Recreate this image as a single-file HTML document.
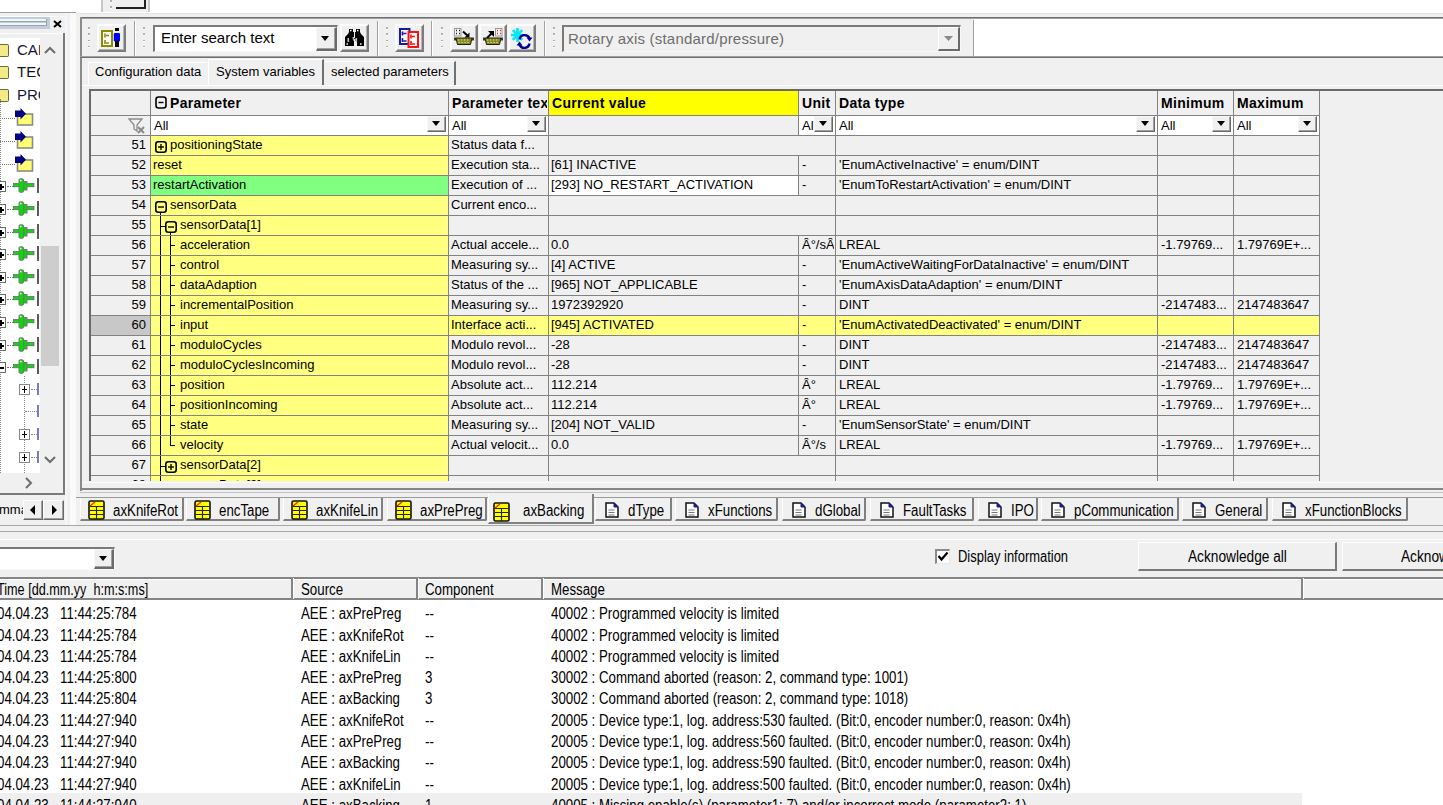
<!DOCTYPE html><html><head><meta charset="utf-8"><style>
*{box-sizing:border-box}
body{margin:0;width:1443px;height:805px;position:relative;overflow:hidden;background:#fff;font-family:'Liberation Sans', sans-serif;font-size:13px;color:#000}
.ab{position:absolute}
.t{position:absolute;white-space:nowrap;line-height:1}
.hl{position:absolute;height:1px}
.vl{position:absolute;width:1px}
.btn3d{position:absolute;background:#f0f0f0;border-top:1px solid #fff;border-left:1px solid #fff;border-right:1px solid #696969;border-bottom:1px solid #696969;box-shadow:inset -1px -1px 0 #a0a0a0}
.dd{position:absolute;background:#f0f0f0;border-top:1px solid #f8f8f8;border-left:1px solid #f8f8f8;border-right:1px solid #696969;border-bottom:1px solid #696969;box-shadow:inset -1px -1px 0 #a0a0a0}
.dd:after{content:"";position:absolute;left:50%;top:50%;margin-left:-5px;margin-top:-3px;border-left:4.5px solid transparent;border-right:4.5px solid transparent;border-top:5px solid #000}
.grip{position:absolute;width:2px;background:repeating-linear-gradient(#b0b0b0 0 1.5px,#fff 1.5px 2.5px,transparent 2.5px 6.3px)}
</style></head><body>

<div class="ab" style="left:101px;top:0px;width:49px;height:12px;background:#f0f0f0;border-left:2px solid #c8c8c8;border-right:2px solid #c8c8c8"></div>
<div class="grip" style="left:110px;top:0px;height:10px"></div>
<div class="ab" style="left:116px;top:0px;width:30px;height:9px;background:#f0f0f0;border-right:2px solid #222;border-bottom:2px solid #222"></div>
<div class="ab" style="left:0px;top:12px;width:76px;height:514px;background:#f0f0f0;"></div>
<div class="ab" style="left:0px;top:12px;width:76px;height:1px;background:#a0a0a0;"></div>
<div class="ab" style="left:0px;top:16px;width:66px;height:1px;background:#fafcfe;"></div>
<div class="ab" style="left:0px;top:17px;width:50px;height:12px;background:#bfcddd;"></div>
<div class="ab" style="left:0px;top:19px;width:47px;height:3px;background:#f2f5f9;border-bottom:1px solid #9aa2aa"></div>
<div class="ab" style="left:0px;top:23px;width:47px;height:3px;background:#f2f5f9;border-bottom:1px solid #9aa2aa"></div>
<div class="ab" style="left:46px;top:19px;width:1px;height:7px;background:#9aa2aa;"></div>
<svg class="ab" style="left:53px;top:20px" width="9" height="8" viewBox="0 0 9 8"><path d="M1 1l7 6M8 1L1 7" stroke="#000" stroke-width="2"/></svg>
<div class="ab" style="left:0px;top:33px;width:65px;height:462px;background:#f0f0f0;border-right:2px solid #7a7a7a;border-bottom:2px solid #7a7a7a"></div>
<div class="ab" style="left:0px;top:38px;width:40px;height:435px;background:#fff;"></div>
<div class="ab" style="left:0px;top:33px;width:63px;height:1px;background:#fcfcfc;"></div>
<div class="ab" style="left:41px;top:246px;width:18px;height:120px;background:#cdcdcd;"></div>
<svg class="ab" style="left:44px;top:45px" width="12" height="10"><polyline points="1,8 6,3 11,8" fill="none" stroke="#6d6d6d" stroke-width="2"/></svg>
<svg class="ab" style="left:44px;top:455px" width="12" height="10"><polyline points="1,2 6,7 11,2" fill="none" stroke="#6d6d6d" stroke-width="2"/></svg>
<svg class="ab" style="left:24px;top:477px" width="10" height="12"><polyline points="2,1 7,6 2,11" fill="none" stroke="#6d6d6d" stroke-width="2"/></svg>
<div class="ab" style="left:65px;top:13px;width:2px;height:513px;background:#f3f6fa;"></div>
<div class="ab" style="left:70px;top:13px;width:6px;height:513px;background:#fafafa;"></div>
<div class="ab" style="left:0px;top:44px;width:9px;height:13px;background:#f3ec86;border:1px solid #6a6a40;border-left:none;border-radius:0 2px 2px 0"></div>
<div class="t" style="left:17px;top:42px;font-size:15px;color:#15153a;width:23px;overflow:hidden">CAI</div>
<div class="ab" style="left:0px;top:66px;width:9px;height:13px;background:#f3ec86;border:1px solid #6a6a40;border-left:none;border-radius:0 2px 2px 0"></div>
<div class="t" style="left:17px;top:64px;font-size:15px;color:#151515;width:23px;overflow:hidden">TEC</div>
<div class="ab" style="left:0px;top:89px;width:9px;height:13px;background:#f3ec86;border:1px solid #6a6a40;border-left:none;border-radius:0 2px 2px 0"></div>
<div class="t" style="left:17px;top:87px;font-size:15px;color:#15153a;width:23px;overflow:hidden">PRC</div>
<div class="ab" style="left:0;top:118px;width:15px;border-top:1px dotted #777"></div>
<svg class="ab" style="left:15px;top:108px" width="20" height="19"><rect x="2.5" y="6" width="15" height="11" fill="#ffff70" stroke="#8a8a8a" stroke-width="1.6"/><polygon points="0,2.5 5.5,2.5 5.5,0 11,5.75 5.5,11.5 5.5,9 0,9" fill="#000080"/></svg>
<div class="ab" style="left:0;top:141px;width:15px;border-top:1px dotted #777"></div>
<svg class="ab" style="left:15px;top:131px" width="20" height="19"><rect x="2.5" y="6" width="15" height="11" fill="#ffff70" stroke="#8a8a8a" stroke-width="1.6"/><polygon points="0,2.5 5.5,2.5 5.5,0 11,5.75 5.5,11.5 5.5,9 0,9" fill="#000080"/></svg>
<div class="ab" style="left:0;top:164px;width:15px;border-top:1px dotted #777"></div>
<svg class="ab" style="left:15px;top:154px" width="20" height="19"><rect x="2.5" y="6" width="15" height="11" fill="#ffff70" stroke="#8a8a8a" stroke-width="1.6"/><polygon points="0,2.5 5.5,2.5 5.5,0 11,5.75 5.5,11.5 5.5,9 0,9" fill="#000080"/></svg>
<div class="ab" style="left:0;top:99px;height:374px;border-left:1px dotted #888"></div>
<div class="ab" style="left:-1px;top:181px;width:7px;height:11px;border:1px solid #6a6a6a;background:#fff"></div>
<div class="ab" style="left:0;top:186px;width:4px;height:2px;background:#000"></div>
<div class="ab" style="left:0;top:184px;width:2px;height:6px;background:#000"></div>
<div class="ab" style="left:7px;top:186px;width:6px;border-top:1px dotted #777"></div>
<svg class="ab" style="left:13px;top:178px" width="22" height="16"><rect x="0.5" y="5.5" width="20.5" height="3.3" fill="#10d810" stroke="#6a5a6a" stroke-width="0.7"/><rect x="6" y="0.8" width="4.5" height="13.5" rx="1.2" fill="#00e000" stroke="#777" stroke-width="1"/><rect x="11" y="3.5" width="3" height="8.5" fill="#00e000" stroke="#777" stroke-width="1"/><rect x="7" y="1.8" width="1.5" height="1.5" fill="#fff"/></svg>
<div class="ab" style="left:37px;top:178px;width:2px;height:15px;background:#5a5a5a;"></div>
<div class="ab" style="left:-1px;top:204px;width:7px;height:11px;border:1px solid #6a6a6a;background:#fff"></div>
<div class="ab" style="left:0;top:209px;width:4px;height:2px;background:#000"></div>
<div class="ab" style="left:0;top:207px;width:2px;height:6px;background:#000"></div>
<div class="ab" style="left:7px;top:209px;width:6px;border-top:1px dotted #777"></div>
<svg class="ab" style="left:13px;top:201px" width="22" height="16"><rect x="0.5" y="5.5" width="20.5" height="3.3" fill="#10d810" stroke="#6a5a6a" stroke-width="0.7"/><rect x="6" y="0.8" width="4.5" height="13.5" rx="1.2" fill="#00e000" stroke="#777" stroke-width="1"/><rect x="11" y="3.5" width="3" height="8.5" fill="#00e000" stroke="#777" stroke-width="1"/><rect x="7" y="1.8" width="1.5" height="1.5" fill="#fff"/></svg>
<div class="ab" style="left:37px;top:201px;width:2px;height:15px;background:#5a5a5a;"></div>
<div class="ab" style="left:-1px;top:227px;width:7px;height:11px;border:1px solid #6a6a6a;background:#fff"></div>
<div class="ab" style="left:0;top:232px;width:4px;height:2px;background:#000"></div>
<div class="ab" style="left:0;top:230px;width:2px;height:6px;background:#000"></div>
<div class="ab" style="left:7px;top:232px;width:6px;border-top:1px dotted #777"></div>
<svg class="ab" style="left:13px;top:224px" width="22" height="16"><rect x="0.5" y="5.5" width="20.5" height="3.3" fill="#10d810" stroke="#6a5a6a" stroke-width="0.7"/><rect x="6" y="0.8" width="4.5" height="13.5" rx="1.2" fill="#00e000" stroke="#777" stroke-width="1"/><rect x="11" y="3.5" width="3" height="8.5" fill="#00e000" stroke="#777" stroke-width="1"/><rect x="7" y="1.8" width="1.5" height="1.5" fill="#fff"/></svg>
<div class="ab" style="left:37px;top:224px;width:2px;height:15px;background:#5a5a5a;"></div>
<div class="ab" style="left:-1px;top:249px;width:7px;height:11px;border:1px solid #6a6a6a;background:#fff"></div>
<div class="ab" style="left:0;top:254px;width:4px;height:2px;background:#000"></div>
<div class="ab" style="left:0;top:252px;width:2px;height:6px;background:#000"></div>
<div class="ab" style="left:7px;top:254px;width:6px;border-top:1px dotted #777"></div>
<svg class="ab" style="left:13px;top:246px" width="22" height="16"><rect x="0.5" y="5.5" width="20.5" height="3.3" fill="#10d810" stroke="#6a5a6a" stroke-width="0.7"/><rect x="6" y="0.8" width="4.5" height="13.5" rx="1.2" fill="#00e000" stroke="#777" stroke-width="1"/><rect x="11" y="3.5" width="3" height="8.5" fill="#00e000" stroke="#777" stroke-width="1"/><rect x="7" y="1.8" width="1.5" height="1.5" fill="#fff"/></svg>
<div class="ab" style="left:37px;top:246px;width:2px;height:15px;background:#5a5a5a;"></div>
<div class="ab" style="left:-1px;top:272px;width:7px;height:11px;border:1px solid #6a6a6a;background:#fff"></div>
<div class="ab" style="left:0;top:277px;width:4px;height:2px;background:#000"></div>
<div class="ab" style="left:0;top:275px;width:2px;height:6px;background:#000"></div>
<div class="ab" style="left:7px;top:277px;width:6px;border-top:1px dotted #777"></div>
<svg class="ab" style="left:13px;top:269px" width="22" height="16"><rect x="0.5" y="5.5" width="20.5" height="3.3" fill="#10d810" stroke="#6a5a6a" stroke-width="0.7"/><rect x="6" y="0.8" width="4.5" height="13.5" rx="1.2" fill="#00e000" stroke="#777" stroke-width="1"/><rect x="11" y="3.5" width="3" height="8.5" fill="#00e000" stroke="#777" stroke-width="1"/><rect x="7" y="1.8" width="1.5" height="1.5" fill="#fff"/></svg>
<div class="ab" style="left:37px;top:269px;width:2px;height:15px;background:#5a5a5a;"></div>
<div class="ab" style="left:-1px;top:294px;width:7px;height:11px;border:1px solid #6a6a6a;background:#fff"></div>
<div class="ab" style="left:0;top:299px;width:4px;height:2px;background:#000"></div>
<div class="ab" style="left:0;top:297px;width:2px;height:6px;background:#000"></div>
<div class="ab" style="left:7px;top:299px;width:6px;border-top:1px dotted #777"></div>
<svg class="ab" style="left:13px;top:291px" width="22" height="16"><rect x="0.5" y="5.5" width="20.5" height="3.3" fill="#10d810" stroke="#6a5a6a" stroke-width="0.7"/><rect x="6" y="0.8" width="4.5" height="13.5" rx="1.2" fill="#00e000" stroke="#777" stroke-width="1"/><rect x="11" y="3.5" width="3" height="8.5" fill="#00e000" stroke="#777" stroke-width="1"/><rect x="7" y="1.8" width="1.5" height="1.5" fill="#fff"/></svg>
<div class="ab" style="left:37px;top:291px;width:2px;height:15px;background:#5a5a5a;"></div>
<div class="ab" style="left:-1px;top:317px;width:7px;height:11px;border:1px solid #6a6a6a;background:#fff"></div>
<div class="ab" style="left:0;top:322px;width:4px;height:2px;background:#000"></div>
<div class="ab" style="left:0;top:320px;width:2px;height:6px;background:#000"></div>
<div class="ab" style="left:7px;top:322px;width:6px;border-top:1px dotted #777"></div>
<svg class="ab" style="left:13px;top:314px" width="22" height="16"><rect x="0.5" y="5.5" width="20.5" height="3.3" fill="#10d810" stroke="#6a5a6a" stroke-width="0.7"/><rect x="6" y="0.8" width="4.5" height="13.5" rx="1.2" fill="#00e000" stroke="#777" stroke-width="1"/><rect x="11" y="3.5" width="3" height="8.5" fill="#00e000" stroke="#777" stroke-width="1"/><rect x="7" y="1.8" width="1.5" height="1.5" fill="#fff"/></svg>
<div class="ab" style="left:37px;top:314px;width:2px;height:15px;background:#5a5a5a;"></div>
<div class="ab" style="left:-1px;top:340px;width:7px;height:11px;border:1px solid #6a6a6a;background:#fff"></div>
<div class="ab" style="left:0;top:345px;width:4px;height:2px;background:#000"></div>
<div class="ab" style="left:0;top:343px;width:2px;height:6px;background:#000"></div>
<div class="ab" style="left:7px;top:345px;width:6px;border-top:1px dotted #777"></div>
<svg class="ab" style="left:13px;top:337px" width="22" height="16"><rect x="0.5" y="5.5" width="20.5" height="3.3" fill="#10d810" stroke="#6a5a6a" stroke-width="0.7"/><rect x="6" y="0.8" width="4.5" height="13.5" rx="1.2" fill="#00e000" stroke="#777" stroke-width="1"/><rect x="11" y="3.5" width="3" height="8.5" fill="#00e000" stroke="#777" stroke-width="1"/><rect x="7" y="1.8" width="1.5" height="1.5" fill="#fff"/></svg>
<div class="ab" style="left:37px;top:337px;width:2px;height:15px;background:#5a5a5a;"></div>
<div class="ab" style="left:-1px;top:362px;width:7px;height:11px;border:1px solid #6a6a6a;background:#fff"></div>
<div class="ab" style="left:0;top:367px;width:4px;height:2px;background:#000"></div>
<div class="ab" style="left:7px;top:367px;width:6px;border-top:1px dotted #777"></div>
<svg class="ab" style="left:13px;top:359px" width="22" height="16"><rect x="0.5" y="5.5" width="20.5" height="3.3" fill="#10d810" stroke="#6a5a6a" stroke-width="0.7"/><rect x="6" y="0.8" width="4.5" height="13.5" rx="1.2" fill="#00e000" stroke="#777" stroke-width="1"/><rect x="11" y="3.5" width="3" height="8.5" fill="#00e000" stroke="#777" stroke-width="1"/><rect x="7" y="1.8" width="1.5" height="1.5" fill="#fff"/></svg>
<div class="ab" style="left:37px;top:359px;width:2px;height:15px;background:#5a5a5a;"></div>
<div class="ab" style="left:24px;top:376px;height:97px;border-left:1px dotted #888"></div>
<div class="ab" style="left:19px;top:384px;width:11px;height:11px;border:1px solid #888;background:#fff"></div>
<div class="ab" style="left:22px;top:389px;width:5px;height:1px;background:#000"></div>
<div class="ab" style="left:24px;top:386px;width:1px;height:7px;background:#000"></div>
<div class="ab" style="left:31px;top:389px;width:6px;border-top:1px dotted #888"></div>
<div class="ab" style="left:37px;top:383px;width:2px;height:12px;background:#4040b0;opacity:0.7"></div>
<div class="ab" style="left:25px;top:411px;width:12px;border-top:1px dotted #888"></div>
<div class="ab" style="left:37px;top:405px;width:2px;height:12px;background:#4040b0;opacity:0.7"></div>
<div class="ab" style="left:19px;top:429px;width:11px;height:11px;border:1px solid #888;background:#fff"></div>
<div class="ab" style="left:22px;top:434px;width:5px;height:1px;background:#000"></div>
<div class="ab" style="left:24px;top:431px;width:1px;height:7px;background:#000"></div>
<div class="ab" style="left:31px;top:434px;width:6px;border-top:1px dotted #888"></div>
<div class="ab" style="left:37px;top:428px;width:2px;height:12px;background:#4040b0;opacity:0.7"></div>
<div class="ab" style="left:19px;top:452px;width:11px;height:11px;border:1px solid #888;background:#fff"></div>
<div class="ab" style="left:22px;top:457px;width:5px;height:1px;background:#000"></div>
<div class="ab" style="left:24px;top:454px;width:1px;height:7px;background:#000"></div>
<div class="ab" style="left:31px;top:457px;width:6px;border-top:1px dotted #888"></div>
<div class="ab" style="left:37px;top:451px;width:2px;height:12px;background:#4040b0;opacity:0.7"></div>
<div class="t" style="left:-1px;top:503px;font-size:13px">mma</div>
<div class="btn3d" style="left:23px;top:500px;width:20px;height:20px"></div>
<div class="btn3d" style="left:43px;top:500px;width:21px;height:20px"></div>
<svg class="ab" style="left:29px;top:505px" width="8" height="10"><polygon points="6,0 6,10 1,5" fill="#000"/></svg>
<svg class="ab" style="left:50px;top:505px" width="8" height="10"><polygon points="2,0 2,10 7,5" fill="#000"/></svg>
<div class="ab" style="left:76px;top:13px;width:1367px;height:513px;background:#f0f0f0;"></div>
<div class="ab" style="left:76px;top:13px;width:1367px;height:1px;background:#e6e6e6;"></div>
<div class="ab" style="left:80px;top:17px;width:1363px;height:1px;background:#707070;"></div>
<div class="ab" style="left:80px;top:18px;width:1363px;height:1px;background:#a0a0a0;"></div>
<div class="ab" style="left:80px;top:17px;width:2px;height:474px;background:#8a8a8a;"></div>
<div class="ab" style="left:974px;top:19px;width:469px;height:38px;background:#fff;"></div>
<div class="ab" style="left:973px;top:20px;width:1px;height:36px;background:#a0a0a0;"></div>
<div class="ab" style="left:80px;top:56px;width:1363px;height:1px;background:#a0a0a0;"></div>
<div class="ab" style="left:80px;top:57px;width:1363px;height:1px;background:#707070;"></div>
<div class="grip" style="left:88px;top:27px;height:25px"></div>
<div class="grip" style="left:143px;top:27px;height:25px"></div>
<div class="grip" style="left:386px;top:27px;height:25px"></div>
<div class="grip" style="left:441px;top:27px;height:25px"></div>
<div class="grip" style="left:553px;top:27px;height:25px"></div>
<div class="ab" style="left:134px;top:21px;width:1px;height:35px;background:#a0a0a0;box-shadow:1px 0 0 #fff"></div>
<div class="ab" style="left:377px;top:21px;width:1px;height:35px;background:#a0a0a0;box-shadow:1px 0 0 #fff"></div>
<div class="ab" style="left:431px;top:21px;width:1px;height:35px;background:#a0a0a0;box-shadow:1px 0 0 #fff"></div>
<div class="ab" style="left:544px;top:21px;width:1px;height:35px;background:#a0a0a0;box-shadow:1px 0 0 #fff"></div>
<div class="ab" style="left:97px;top:24px;width:29px;height:28px;background:#f0f0f0;border-top:2px solid #fcfcfc;border-left:2px solid #fcfcfc;border-right:2px solid #7c7c7c;border-bottom:2px solid #7c7c7c;box-shadow:inset -1px -1px 0 #b4b4b4"></div>
<svg class="ab" style="left:100px;top:27px" width="22" height="22" viewBox="0 0 22 22"><rect x="2" y="4" width="10" height="15" fill="#fff" stroke="#8b8b00" stroke-width="2"/><path d="M5 6.5v4M6 8.5h3M5 13v4M6 16h3" stroke="#8b8b00" stroke-width="1.6"/><rect x="15" y="1" width="4" height="3" fill="#000"/><rect x="13.8" y="6" width="6.2" height="8.5" rx="1.2" fill="#0000ff"/><rect x="15" y="14" width="4" height="6" fill="#000"/></svg>
<div class="ab" style="left:153px;top:25px;width:185px;height:27px;background:#fff;border-top:2px solid #7a7a7a;border-left:2px solid #7a7a7a;border-bottom:1px solid #f8f8f8;border-right:1px solid #f8f8f8"></div>
<div class="t" style="left:161px;top:30px;font-size:15px;color:#000">Enter search text</div>
<div class="dd" style="left:316px;top:27px;width:21px;height:24px;border-right:2px solid #6a6a6a;border-bottom:2px solid #6a6a6a"></div>
<div class="ab" style="left:340px;top:24px;width:29px;height:28px;background:#f0f0f0;border-top:2px solid #fcfcfc;border-left:2px solid #fcfcfc;border-right:2px solid #7c7c7c;border-bottom:2px solid #7c7c7c;box-shadow:inset -1px -1px 0 #b4b4b4"></div>
<svg class="ab" style="left:344px;top:29px" width="21" height="17" viewBox="0 0 21 17"><path d="M5 0h4v3h1v6h1V3h1V0h4v3l1 2 3 3v9h-7v-5h-1.5v-2h-2v2H10v5H1V8l3-3 1-2z" fill="#000"/><rect x="3.5" y="9" width="1.6" height="4" fill="#bbb"/><rect x="11.5" y="9" width="1.6" height="4" fill="#bbb"/><rect x="8.6" y="8" width="1.6" height="2.5" fill="#bbb"/><rect x="6" y="0.8" width="1.5" height="1.5" fill="#fff"/><rect x="13" y="0.8" width="1.5" height="1.5" fill="#fff"/><rect x="2.5" y="14" width="1.5" height="2" fill="#bbb"/><rect x="16" y="14" width="1.5" height="2" fill="#bbb"/></svg>
<div class="ab" style="left:395px;top:24px;width:29px;height:28px;background:#f0f0f0;border-top:2px solid #fcfcfc;border-left:2px solid #fcfcfc;border-right:2px solid #7c7c7c;border-bottom:2px solid #7c7c7c;box-shadow:inset -1px -1px 0 #b4b4b4"></div>
<svg class="ab" style="left:398px;top:27px" width="22" height="21" viewBox="0 0 22 21"><rect x="2" y="2" width="9.5" height="15" fill="#fff" stroke="#1a1aa0" stroke-width="2"/><path d="M4.5 4.5v4M5.5 6.5h3M4.5 11v4M5.5 14h3" stroke="#1a1aa0" stroke-width="1.7"/><rect x="10.5" y="5" width="9.5" height="15" fill="#fff" stroke="#ff1010" stroke-width="2"/><path d="M13 7.5v4M14 9.5h3M13 14v4M14 17h3" stroke="#ff1010" stroke-width="1.7"/></svg>
<div class="ab" style="left:450px;top:24px;width:28px;height:28px;background:#f0f0f0;border-top:2px solid #fcfcfc;border-left:2px solid #fcfcfc;border-right:2px solid #7c7c7c;border-bottom:2px solid #7c7c7c;box-shadow:inset -1px -1px 0 #b4b4b4"></div>
<svg class="ab" style="left:453px;top:27px" width="22" height="22" viewBox="0 0 22 22"><path d="M3 11h16l-1.5 6.5h-13z" fill="#8a8a20" stroke="#202010" stroke-width="1"/><path d="M5 13h12M5.5 15.5h11" stroke="#e8e8b0" stroke-width="1" stroke-dasharray="1.2 1.8"/><path d="M2 10.5v3M20 10.5v3" stroke="#000" stroke-width="1.5"/><rect x="1.5" y="1.5" width="6.5" height="7.5" fill="#f4f4f4" stroke="#999" stroke-width="1"/><path d="M3 3.5h1M6 3.5h1M3 6.5h1M6 6.5h1" stroke="#222" stroke-width="1.4"/><path d="M10 4.5l5 4.5" stroke="#000" stroke-width="2"/><path d="M16.5 5.5v5h-5z" fill="#000"/></svg>
<div class="ab" style="left:479px;top:24px;width:28px;height:28px;background:#f0f0f0;border-top:2px solid #fcfcfc;border-left:2px solid #fcfcfc;border-right:2px solid #7c7c7c;border-bottom:2px solid #7c7c7c;box-shadow:inset -1px -1px 0 #b4b4b4"></div>
<svg class="ab" style="left:482px;top:27px" width="22" height="22" viewBox="0 0 22 22"><path d="M3 11h16l-1.5 6.5h-13z" fill="#8a8a20" stroke="#202010" stroke-width="1"/><path d="M5 13h12M5.5 15.5h11" stroke="#e8e8b0" stroke-width="1" stroke-dasharray="1.2 1.8"/><path d="M2 10.5v3M20 10.5v3" stroke="#000" stroke-width="1.5"/><rect x="13.5" y="1.5" width="6.5" height="7.5" fill="#f4f4f4" stroke="#999" stroke-width="1"/><path d="M15 3.5h1M18 3.5h1M15 6.5h1M18 6.5h1" stroke="#f22" stroke-width="1.4"/><path d="M5 11l5-5" stroke="#000" stroke-width="2"/><path d="M6 4h6v6z" fill="#000"/></svg>
<div class="ab" style="left:508px;top:24px;width:28px;height:28px;background:#f0f0f0;border-top:2px solid #fcfcfc;border-left:2px solid #fcfcfc;border-right:2px solid #7c7c7c;border-bottom:2px solid #7c7c7c;box-shadow:inset -1px -1px 0 #b4b4b4"></div>
<svg class="ab" style="left:511px;top:27px" width="22" height="22" viewBox="0 0 22 22"><path d="M6.5 1v14M0 8h13M1.8 3.2l9.4 9.6M11.2 3.2l-9.4 9.6" stroke="#00e8f0" stroke-width="2.6"/><path d="M8.5 12.5A5.2 5.2 0 0 1 18.5 11.5" stroke="#000090" stroke-width="2.4" fill="none"/><path d="M18.5 16.5A5.2 5.2 0 0 1 8.5 17.5" stroke="#000090" stroke-width="2.4" fill="none"/><path d="M15.5 10.5h6l-3 4z" fill="#000090"/><path d="M5.5 18.5h6l-3-4z" fill="#000090"/></svg>
<div class="ab" style="left:562px;top:25px;width:399px;height:27px;background:#f0f0f0;border-top:2px solid #7a7a7a;border-left:2px solid #7a7a7a;border-bottom:1px solid #f8f8f8;border-right:1px solid #f8f8f8"></div>
<div class="t" style="left:568px;top:31px;font-size:15px;color:#6d6d6d;letter-spacing:0.2px">Rotary axis (standard/pressure)</div>
<div class="ab" style="left:938px;top:27px;width:22px;height:24px;background:#f0f0f0;border-top:1px solid #fff;border-left:1px solid #fff;border-right:2px solid #6a6a6a;border-bottom:2px solid #6a6a6a"></div>
<svg class="ab" style="left:944px;top:36px" width="10" height="6"><polygon points="0,0 9,0 4.5,5" fill="#8a8a8a"/></svg>
<div class="ab" style="left:88px;top:62px;width:119px;height:23px;background:#f0f0f0;border-top:1px solid #fff;border-left:1px solid #fff"></div>
<div class="t" style="left:95px;top:65px;font-size:13px">Configuration data</div>
<div class="ab" style="left:208px;top:59px;width:116px;height:27px;background:#f0f0f0;border-top:1px solid #fff;border-left:1px solid #fff;border-right:2px solid #707070"></div>
<div class="t" style="left:216px;top:65px;font-size:13px">System variables</div>
<div class="ab" style="left:325px;top:61px;width:131px;height:24px;background:#f0f0f0;border-top:1px solid #fff;border-right:2px solid #707070"></div>
<div class="t" style="left:331px;top:65px;font-size:13px">selected parameters</div>
<div class="ab" style="left:82px;top:85px;width:1361px;height:1px;background:#fff;"></div>
<div class="ab" style="left:89px;top:89px;width:1354px;height:2px;background:#6a6a6a;"></div>
<div class="ab" style="left:89px;top:89px;width:2px;height:392px;background:#6a6a6a;"></div>
<div class="ab" style="left:549px;top:91px;width:249px;height:24px;background:#ffff00;"></div>
<svg class="ab" style="left:155px;top:96px" width="12" height="13"><rect x="1" y="1" width="10" height="11" rx="2.5" fill="none" stroke="#000" stroke-width="1.6"/><line x1="3.5" y1="6.5" x2="8.5" y2="6.5" stroke="#000" stroke-width="1.4"/></svg>
<div class="t" style="left:170px;top:96px;font-size:14px;font-weight:bold;letter-spacing:0.3px;">Parameter</div>
<div class="t" style="left:452px;top:96px;font-size:14px;font-weight:bold;letter-spacing:0.3px;width:95px;overflow:hidden">Parameter tex</div>
<div class="t" style="left:552px;top:96px;font-size:14px;font-weight:bold;letter-spacing:0.3px;">Current value</div>
<div class="t" style="left:802px;top:96px;font-size:14px;font-weight:bold;letter-spacing:0.3px;">Unit</div>
<div class="t" style="left:839px;top:96px;font-size:14px;font-weight:bold;letter-spacing:0.3px;">Data type</div>
<div class="t" style="left:1161px;top:96px;font-size:14px;font-weight:bold;letter-spacing:0.3px;">Minimum</div>
<div class="t" style="left:1237px;top:96px;font-size:14px;font-weight:bold;letter-spacing:0.3px;">Maximum</div>
<div class="ab" style="left:151px;top:116px;width:297px;height:19px;background:#fff;"></div>
<div class="t" style="left:154px;top:119px;font-size:13px">All</div>
<div class="dd" style="left:427px;top:116px;width:19px;height:16px"></div>
<div class="ab" style="left:449px;top:116px;width:99px;height:19px;background:#fff;"></div>
<div class="t" style="left:452px;top:119px;font-size:13px">All</div>
<div class="dd" style="left:527px;top:116px;width:19px;height:16px"></div>
<div class="ab" style="left:799px;top:116px;width:36px;height:19px;background:#fff;"></div>
<div class="t" style="left:802px;top:119px;font-size:13px">Al</div>
<div class="dd" style="left:814px;top:116px;width:19px;height:16px"></div>
<div class="ab" style="left:836px;top:116px;width:321px;height:19px;background:#fff;"></div>
<div class="t" style="left:839px;top:119px;font-size:13px">All</div>
<div class="dd" style="left:1136px;top:116px;width:19px;height:16px"></div>
<div class="ab" style="left:1158px;top:116px;width:75px;height:19px;background:#fff;"></div>
<div class="t" style="left:1161px;top:119px;font-size:13px">All</div>
<div class="dd" style="left:1212px;top:116px;width:19px;height:16px"></div>
<div class="ab" style="left:1234px;top:116px;width:85px;height:19px;background:#fff;"></div>
<div class="t" style="left:1237px;top:119px;font-size:13px">All</div>
<div class="dd" style="left:1298px;top:116px;width:19px;height:16px"></div>
<svg class="ab" style="left:128px;top:118px" width="18" height="16"><path d="M1 1h13l-5 6v6l-3-2V7z" fill="none" stroke="#8a8a8a" stroke-width="1.3"/><path d="M10 9l6 6M16 9l-6 6" stroke="#8a8a8a" stroke-width="2"/></svg>
<div class="ab" style="left:151px;top:135px;width:297px;height:20px;background:#ffff80;"></div>
<div class="t" style="left:91px;top:138px;width:55px;text-align:right;font-size:13px">51</div>
<svg class="ab" style="left:155px;top:141px" width="12" height="12"><rect x="0.8" y="0.8" width="10.4" height="10.4" rx="2.5" fill="none" stroke="#000" stroke-width="1.6"/><line x1="3" y1="6" x2="9" y2="6" stroke="#000" stroke-width="1.4"/><line x1="6" y1="3" x2="6" y2="9" stroke="#000" stroke-width="1.4"/></svg>
<div class="t" style="left:170px;top:138px;">positioningState</div>
<div class="t" style="left:451px;top:138px;">Status data f...</div>
<div class="ab" style="left:151px;top:155px;width:297px;height:20px;background:#ffff80;"></div>
<div class="t" style="left:91px;top:158px;width:55px;text-align:right;font-size:13px">52</div>
<div class="t" style="left:153px;top:158px;">reset</div>
<div class="t" style="left:451px;top:158px;">Execution sta...</div>
<div class="t" style="left:551px;top:158px;">[61] INACTIVE</div>
<div class="t" style="left:802px;top:158px;width:32px;overflow:hidden">-</div>
<div class="t" style="left:839px;top:158px;">'EnumActiveInactive' = enum/DINT</div>
<div class="t" style="left:1161px;top:158px;"></div>
<div class="t" style="left:1237px;top:158px;"></div>
<div class="ab" style="left:151px;top:175px;width:297px;height:20px;background:#80ff80;"></div>
<div class="ab" style="left:549px;top:175px;width:249px;height:20px;background:#fff;"></div>
<div class="t" style="left:91px;top:178px;width:55px;text-align:right;font-size:13px">53</div>
<div class="t" style="left:153px;top:178px;">restartActivation</div>
<div class="t" style="left:451px;top:178px;">Execution of ...</div>
<div class="t" style="left:551px;top:178px;">[293] NO_RESTART_ACTIVATION</div>
<div class="t" style="left:802px;top:178px;width:32px;overflow:hidden">-</div>
<div class="t" style="left:839px;top:178px;">'EnumToRestartActivation' = enum/DINT</div>
<div class="t" style="left:1161px;top:178px;"></div>
<div class="t" style="left:1237px;top:178px;"></div>
<div class="ab" style="left:151px;top:195px;width:297px;height:20px;background:#ffff80;"></div>
<div class="t" style="left:91px;top:198px;width:55px;text-align:right;font-size:13px">54</div>
<svg class="ab" style="left:155px;top:201px" width="12" height="12"><rect x="0.8" y="0.8" width="10.4" height="10.4" rx="2.5" fill="none" stroke="#000" stroke-width="1.6"/><line x1="3" y1="6" x2="9" y2="6" stroke="#000" stroke-width="1.4"/></svg>
<div class="t" style="left:170px;top:198px;">sensorData</div>
<div class="ab" style="left:160px;top:212px;width:1px;height:3px;background:#000;"></div>
<div class="t" style="left:451px;top:198px;">Current enco...</div>
<div class="ab" style="left:151px;top:215px;width:297px;height:20px;background:#ffff80;"></div>
<div class="t" style="left:91px;top:218px;width:55px;text-align:right;font-size:13px">55</div>
<div class="ab" style="left:160px;top:215px;width:1px;height:20px;background:#000;"></div>
<div class="ab" style="left:160px;top:226px;width:5px;height:1px;background:#000;"></div>
<svg class="ab" style="left:165px;top:221px" width="12" height="12"><rect x="0.8" y="0.8" width="10.4" height="10.4" rx="2.5" fill="none" stroke="#000" stroke-width="1.6"/><line x1="3" y1="6" x2="9" y2="6" stroke="#000" stroke-width="1.4"/></svg>
<div class="t" style="left:180px;top:218px;">sensorData[1]</div>
<div class="ab" style="left:170px;top:232px;width:1px;height:3px;background:#000;"></div>
<div class="t" style="left:451px;top:218px;"></div>
<div class="ab" style="left:151px;top:235px;width:297px;height:20px;background:#ffff80;"></div>
<div class="t" style="left:91px;top:238px;width:55px;text-align:right;font-size:13px">56</div>
<div class="ab" style="left:160px;top:235px;width:1px;height:20px;background:#000;"></div>
<div class="ab" style="left:170px;top:235px;width:1px;height:20px;background:#000;"></div>
<div class="ab" style="left:170px;top:245px;width:5px;height:1px;background:#000;"></div>
<div class="t" style="left:180px;top:238px;">acceleration</div>
<div class="t" style="left:451px;top:238px;">Actual accele...</div>
<div class="t" style="left:551px;top:238px;">0.0</div>
<div class="t" style="left:802px;top:238px;width:32px;overflow:hidden">&Acirc;&deg;/s&Acirc;</div>
<div class="t" style="left:839px;top:238px;">LREAL</div>
<div class="t" style="left:1161px;top:238px;">-1.79769...</div>
<div class="t" style="left:1237px;top:238px;">1.79769E+...</div>
<div class="ab" style="left:151px;top:255px;width:297px;height:20px;background:#ffff80;"></div>
<div class="t" style="left:91px;top:258px;width:55px;text-align:right;font-size:13px">57</div>
<div class="ab" style="left:160px;top:255px;width:1px;height:20px;background:#000;"></div>
<div class="ab" style="left:170px;top:255px;width:1px;height:20px;background:#000;"></div>
<div class="ab" style="left:170px;top:265px;width:5px;height:1px;background:#000;"></div>
<div class="t" style="left:180px;top:258px;">control</div>
<div class="t" style="left:451px;top:258px;">Measuring sy...</div>
<div class="t" style="left:551px;top:258px;">[4] ACTIVE</div>
<div class="t" style="left:802px;top:258px;width:32px;overflow:hidden">-</div>
<div class="t" style="left:839px;top:258px;">'EnumActiveWaitingForDataInactive' = enum/DINT</div>
<div class="t" style="left:1161px;top:258px;"></div>
<div class="t" style="left:1237px;top:258px;"></div>
<div class="ab" style="left:151px;top:275px;width:297px;height:20px;background:#ffff80;"></div>
<div class="t" style="left:91px;top:278px;width:55px;text-align:right;font-size:13px">58</div>
<div class="ab" style="left:160px;top:275px;width:1px;height:20px;background:#000;"></div>
<div class="ab" style="left:170px;top:275px;width:1px;height:20px;background:#000;"></div>
<div class="ab" style="left:170px;top:285px;width:5px;height:1px;background:#000;"></div>
<div class="t" style="left:180px;top:278px;">dataAdaption</div>
<div class="t" style="left:451px;top:278px;">Status of the ...</div>
<div class="t" style="left:551px;top:278px;">[965] NOT_APPLICABLE</div>
<div class="t" style="left:802px;top:278px;width:32px;overflow:hidden">-</div>
<div class="t" style="left:839px;top:278px;">'EnumAxisDataAdaption' = enum/DINT</div>
<div class="t" style="left:1161px;top:278px;"></div>
<div class="t" style="left:1237px;top:278px;"></div>
<div class="ab" style="left:151px;top:295px;width:297px;height:20px;background:#ffff80;"></div>
<div class="t" style="left:91px;top:298px;width:55px;text-align:right;font-size:13px">59</div>
<div class="ab" style="left:160px;top:295px;width:1px;height:20px;background:#000;"></div>
<div class="ab" style="left:170px;top:295px;width:1px;height:20px;background:#000;"></div>
<div class="ab" style="left:170px;top:305px;width:5px;height:1px;background:#000;"></div>
<div class="t" style="left:180px;top:298px;">incrementalPosition</div>
<div class="t" style="left:451px;top:298px;">Measuring sy...</div>
<div class="t" style="left:551px;top:298px;">1972392920</div>
<div class="t" style="left:802px;top:298px;width:32px;overflow:hidden">-</div>
<div class="t" style="left:839px;top:298px;">DINT</div>
<div class="t" style="left:1161px;top:298px;">-2147483...</div>
<div class="t" style="left:1237px;top:298px;">2147483647</div>
<div class="ab" style="left:151px;top:315px;width:297px;height:20px;background:#ffff80;"></div>
<div class="ab" style="left:91px;top:315px;width:59px;height:20px;background:#c8c8c8;"></div>
<div class="ab" style="left:449px;top:315px;width:870px;height:20px;background:#ffff80;"></div>
<div class="t" style="left:91px;top:318px;width:55px;text-align:right;font-size:13px">60</div>
<div class="ab" style="left:160px;top:315px;width:1px;height:20px;background:#000;"></div>
<div class="ab" style="left:170px;top:315px;width:1px;height:20px;background:#000;"></div>
<div class="ab" style="left:170px;top:325px;width:5px;height:1px;background:#000;"></div>
<div class="t" style="left:180px;top:318px;">input</div>
<div class="t" style="left:451px;top:318px;">Interface acti...</div>
<div class="t" style="left:551px;top:318px;">[945] ACTIVATED</div>
<div class="t" style="left:802px;top:318px;width:32px;overflow:hidden">-</div>
<div class="t" style="left:839px;top:318px;">'EnumActivatedDeactivated' = enum/DINT</div>
<div class="t" style="left:1161px;top:318px;"></div>
<div class="t" style="left:1237px;top:318px;"></div>
<div class="ab" style="left:151px;top:335px;width:297px;height:20px;background:#ffff80;"></div>
<div class="t" style="left:91px;top:338px;width:55px;text-align:right;font-size:13px">61</div>
<div class="ab" style="left:160px;top:335px;width:1px;height:20px;background:#000;"></div>
<div class="ab" style="left:170px;top:335px;width:1px;height:20px;background:#000;"></div>
<div class="ab" style="left:170px;top:345px;width:5px;height:1px;background:#000;"></div>
<div class="t" style="left:180px;top:338px;">moduloCycles</div>
<div class="t" style="left:451px;top:338px;">Modulo revol...</div>
<div class="t" style="left:551px;top:338px;">-28</div>
<div class="t" style="left:802px;top:338px;width:32px;overflow:hidden">-</div>
<div class="t" style="left:839px;top:338px;">DINT</div>
<div class="t" style="left:1161px;top:338px;">-2147483...</div>
<div class="t" style="left:1237px;top:338px;">2147483647</div>
<div class="ab" style="left:151px;top:355px;width:297px;height:20px;background:#ffff80;"></div>
<div class="t" style="left:91px;top:358px;width:55px;text-align:right;font-size:13px">62</div>
<div class="ab" style="left:160px;top:355px;width:1px;height:20px;background:#000;"></div>
<div class="ab" style="left:170px;top:355px;width:1px;height:20px;background:#000;"></div>
<div class="ab" style="left:170px;top:365px;width:5px;height:1px;background:#000;"></div>
<div class="t" style="left:180px;top:358px;">moduloCyclesIncoming</div>
<div class="t" style="left:451px;top:358px;">Modulo revol...</div>
<div class="t" style="left:551px;top:358px;">-28</div>
<div class="t" style="left:802px;top:358px;width:32px;overflow:hidden">-</div>
<div class="t" style="left:839px;top:358px;">DINT</div>
<div class="t" style="left:1161px;top:358px;">-2147483...</div>
<div class="t" style="left:1237px;top:358px;">2147483647</div>
<div class="ab" style="left:151px;top:375px;width:297px;height:20px;background:#ffff80;"></div>
<div class="t" style="left:91px;top:378px;width:55px;text-align:right;font-size:13px">63</div>
<div class="ab" style="left:160px;top:375px;width:1px;height:20px;background:#000;"></div>
<div class="ab" style="left:170px;top:375px;width:1px;height:20px;background:#000;"></div>
<div class="ab" style="left:170px;top:385px;width:5px;height:1px;background:#000;"></div>
<div class="t" style="left:180px;top:378px;">position</div>
<div class="t" style="left:451px;top:378px;">Absolute act...</div>
<div class="t" style="left:551px;top:378px;">112.214</div>
<div class="t" style="left:802px;top:378px;width:32px;overflow:hidden">&Acirc;&deg;</div>
<div class="t" style="left:839px;top:378px;">LREAL</div>
<div class="t" style="left:1161px;top:378px;">-1.79769...</div>
<div class="t" style="left:1237px;top:378px;">1.79769E+...</div>
<div class="ab" style="left:151px;top:395px;width:297px;height:20px;background:#ffff80;"></div>
<div class="t" style="left:91px;top:398px;width:55px;text-align:right;font-size:13px">64</div>
<div class="ab" style="left:160px;top:395px;width:1px;height:20px;background:#000;"></div>
<div class="ab" style="left:170px;top:395px;width:1px;height:20px;background:#000;"></div>
<div class="ab" style="left:170px;top:405px;width:5px;height:1px;background:#000;"></div>
<div class="t" style="left:180px;top:398px;">positionIncoming</div>
<div class="t" style="left:451px;top:398px;">Absolute act...</div>
<div class="t" style="left:551px;top:398px;">112.214</div>
<div class="t" style="left:802px;top:398px;width:32px;overflow:hidden">&Acirc;&deg;</div>
<div class="t" style="left:839px;top:398px;">LREAL</div>
<div class="t" style="left:1161px;top:398px;">-1.79769...</div>
<div class="t" style="left:1237px;top:398px;">1.79769E+...</div>
<div class="ab" style="left:151px;top:415px;width:297px;height:20px;background:#ffff80;"></div>
<div class="t" style="left:91px;top:418px;width:55px;text-align:right;font-size:13px">65</div>
<div class="ab" style="left:160px;top:415px;width:1px;height:20px;background:#000;"></div>
<div class="ab" style="left:170px;top:415px;width:1px;height:20px;background:#000;"></div>
<div class="ab" style="left:170px;top:425px;width:5px;height:1px;background:#000;"></div>
<div class="t" style="left:180px;top:418px;">state</div>
<div class="t" style="left:451px;top:418px;">Measuring sy...</div>
<div class="t" style="left:551px;top:418px;">[204] NOT_VALID</div>
<div class="t" style="left:802px;top:418px;width:32px;overflow:hidden">-</div>
<div class="t" style="left:839px;top:418px;">'EnumSensorState' = enum/DINT</div>
<div class="t" style="left:1161px;top:418px;"></div>
<div class="t" style="left:1237px;top:418px;"></div>
<div class="ab" style="left:151px;top:435px;width:297px;height:20px;background:#ffff80;"></div>
<div class="t" style="left:91px;top:438px;width:55px;text-align:right;font-size:13px">66</div>
<div class="ab" style="left:160px;top:435px;width:1px;height:20px;background:#000;"></div>
<div class="ab" style="left:170px;top:435px;width:1px;height:11px;background:#000;"></div>
<div class="ab" style="left:170px;top:445px;width:5px;height:1px;background:#000;"></div>
<div class="t" style="left:180px;top:438px;">velocity</div>
<div class="t" style="left:451px;top:438px;">Actual velocit...</div>
<div class="t" style="left:551px;top:438px;">0.0</div>
<div class="t" style="left:802px;top:438px;width:32px;overflow:hidden">&Acirc;&deg;/s</div>
<div class="t" style="left:839px;top:438px;">LREAL</div>
<div class="t" style="left:1161px;top:438px;">-1.79769...</div>
<div class="t" style="left:1237px;top:438px;">1.79769E+...</div>
<div class="ab" style="left:151px;top:455px;width:297px;height:20px;background:#ffff80;"></div>
<div class="t" style="left:91px;top:458px;width:55px;text-align:right;font-size:13px">67</div>
<div class="ab" style="left:160px;top:455px;width:1px;height:20px;background:#000;"></div>
<div class="ab" style="left:160px;top:466px;width:5px;height:1px;background:#000;"></div>
<svg class="ab" style="left:165px;top:461px" width="12" height="12"><rect x="0.8" y="0.8" width="10.4" height="10.4" rx="2.5" fill="none" stroke="#000" stroke-width="1.6"/><line x1="3" y1="6" x2="9" y2="6" stroke="#000" stroke-width="1.4"/><line x1="6" y1="3" x2="6" y2="9" stroke="#000" stroke-width="1.4"/></svg>
<div class="t" style="left:180px;top:458px;">sensorData[2]</div>
<div class="t" style="left:451px;top:458px;"></div>
<div class="ab" style="left:151px;top:475px;width:297px;height:6px;background:#ffff80;"></div>
<div class="t" style="left:91px;top:478px;width:55px;text-align:right;font-size:13px">68</div>
<div class="ab" style="left:160px;top:475px;width:1px;height:6px;background:#000;"></div>
<div class="t" style="left:180px;top:478px;">sensorData[3]</div>
<div class="t" style="left:451px;top:478px;"></div>
<div class="ab" style="left:91px;top:481px;width:1352px;height:15px;background:#f0f0f0;"></div>
<div class="ab" style="left:91px;top:135px;width:1228px;height:1px;background:#828282;"></div>
<div class="ab" style="left:91px;top:155px;width:1228px;height:1px;background:#828282;"></div>
<div class="ab" style="left:91px;top:175px;width:1228px;height:1px;background:#828282;"></div>
<div class="ab" style="left:91px;top:195px;width:1228px;height:1px;background:#828282;"></div>
<div class="ab" style="left:91px;top:215px;width:1228px;height:1px;background:#828282;"></div>
<div class="ab" style="left:91px;top:235px;width:1228px;height:1px;background:#828282;"></div>
<div class="ab" style="left:91px;top:255px;width:1228px;height:1px;background:#828282;"></div>
<div class="ab" style="left:91px;top:275px;width:1228px;height:1px;background:#828282;"></div>
<div class="ab" style="left:91px;top:295px;width:1228px;height:1px;background:#828282;"></div>
<div class="ab" style="left:91px;top:315px;width:1228px;height:1px;background:#828282;"></div>
<div class="ab" style="left:91px;top:335px;width:1228px;height:1px;background:#828282;"></div>
<div class="ab" style="left:91px;top:355px;width:1228px;height:1px;background:#828282;"></div>
<div class="ab" style="left:91px;top:375px;width:1228px;height:1px;background:#828282;"></div>
<div class="ab" style="left:91px;top:395px;width:1228px;height:1px;background:#828282;"></div>
<div class="ab" style="left:91px;top:415px;width:1228px;height:1px;background:#828282;"></div>
<div class="ab" style="left:91px;top:435px;width:1228px;height:1px;background:#828282;"></div>
<div class="ab" style="left:91px;top:455px;width:1228px;height:1px;background:#828282;"></div>
<div class="ab" style="left:91px;top:475px;width:1228px;height:1px;background:#828282;"></div>
<div class="ab" style="left:91px;top:115px;width:1228px;height:1px;background:#828282;"></div>
<div class="ab" style="left:150px;top:91px;width:1px;height:390px;background:#828282;"></div>
<div class="ab" style="left:448px;top:91px;width:1px;height:390px;background:#828282;"></div>
<div class="ab" style="left:548px;top:91px;width:1px;height:390px;background:#828282;"></div>
<div class="ab" style="left:798px;top:91px;width:1px;height:44px;background:#828282;"></div>
<div class="ab" style="left:798px;top:155px;width:1px;height:20px;background:#828282;"></div>
<div class="ab" style="left:798px;top:175px;width:1px;height:20px;background:#828282;"></div>
<div class="ab" style="left:798px;top:235px;width:1px;height:20px;background:#828282;"></div>
<div class="ab" style="left:798px;top:255px;width:1px;height:20px;background:#828282;"></div>
<div class="ab" style="left:798px;top:275px;width:1px;height:20px;background:#828282;"></div>
<div class="ab" style="left:798px;top:295px;width:1px;height:20px;background:#828282;"></div>
<div class="ab" style="left:798px;top:315px;width:1px;height:20px;background:#828282;"></div>
<div class="ab" style="left:798px;top:335px;width:1px;height:20px;background:#828282;"></div>
<div class="ab" style="left:798px;top:355px;width:1px;height:20px;background:#828282;"></div>
<div class="ab" style="left:798px;top:375px;width:1px;height:20px;background:#828282;"></div>
<div class="ab" style="left:798px;top:395px;width:1px;height:20px;background:#828282;"></div>
<div class="ab" style="left:798px;top:415px;width:1px;height:20px;background:#828282;"></div>
<div class="ab" style="left:798px;top:435px;width:1px;height:20px;background:#828282;"></div>
<div class="ab" style="left:835px;top:91px;width:1px;height:390px;background:#828282;"></div>
<div class="ab" style="left:1157px;top:91px;width:1px;height:390px;background:#828282;"></div>
<div class="ab" style="left:1233px;top:91px;width:1px;height:390px;background:#828282;"></div>
<div class="ab" style="left:1319px;top:91px;width:1px;height:390px;background:#828282;"></div>
<div class="ab" style="left:82px;top:482px;width:1361px;height:1px;background:#fbfbfb;"></div>
<div class="ab" style="left:80px;top:488px;width:1363px;height:2px;background:#858585;"></div>
<div class="ab" style="left:80px;top:492px;width:1363px;height:1px;background:#c4c4c4;"></div>
<div class="ab" style="left:76px;top:497px;width:1367px;height:1px;background:#9a9a9a;"></div>
<div class="ab" style="left:80px;top:498px;width:104px;height:23px;background:#f0f0f0;border-left:1px solid #fff;border-right:2px solid #808080;border-bottom:2px solid #808080;border-bottom-right-radius:2px"></div>
<svg class="ab" style="left:88px;top:500px" width="17" height="20"><rect x="1" y="1" width="15" height="18" rx="1.5" fill="#ffff00" stroke="#111" stroke-width="1.6"/><path d="M1.5 6.5h14M1.5 10.5h14M1.5 14.5h14M8.5 6v13" stroke="#222" stroke-width="1.1"/><path d="M2 6l5-4" stroke="#ff2020" stroke-width="1.4"/></svg>
<div class="t" style="left:113px;top:503px;font-size:16px;transform:scaleX(0.83);transform-origin:0 0;">axKnifeRot</div>
<div class="ab" style="left:186px;top:498px;width:94px;height:23px;background:#f0f0f0;border-left:1px solid #fff;border-right:2px solid #808080;border-bottom:2px solid #808080;border-bottom-right-radius:2px"></div>
<svg class="ab" style="left:194px;top:500px" width="17" height="20"><rect x="1" y="1" width="15" height="18" rx="1.5" fill="#ffff00" stroke="#111" stroke-width="1.6"/><path d="M1.5 6.5h14M1.5 10.5h14M1.5 14.5h14M8.5 6v13" stroke="#222" stroke-width="1.1"/><path d="M2 6l5-4" stroke="#ff2020" stroke-width="1.4"/></svg>
<div class="t" style="left:219px;top:503px;font-size:16px;transform:scaleX(0.83);transform-origin:0 0;">encTape</div>
<div class="ab" style="left:283px;top:498px;width:100px;height:23px;background:#f0f0f0;border-left:1px solid #fff;border-right:2px solid #808080;border-bottom:2px solid #808080;border-bottom-right-radius:2px"></div>
<svg class="ab" style="left:291px;top:500px" width="17" height="20"><rect x="1" y="1" width="15" height="18" rx="1.5" fill="#ffff00" stroke="#111" stroke-width="1.6"/><path d="M1.5 6.5h14M1.5 10.5h14M1.5 14.5h14M8.5 6v13" stroke="#222" stroke-width="1.1"/><path d="M2 6l5-4" stroke="#ff2020" stroke-width="1.4"/></svg>
<div class="t" style="left:316px;top:503px;font-size:16px;transform:scaleX(0.83);transform-origin:0 0;">axKnifeLin</div>
<div class="ab" style="left:387px;top:498px;width:100px;height:23px;background:#f0f0f0;border-left:1px solid #fff;border-right:2px solid #808080;border-bottom:2px solid #808080;border-bottom-right-radius:2px"></div>
<svg class="ab" style="left:395px;top:500px" width="17" height="20"><rect x="1" y="1" width="15" height="18" rx="1.5" fill="#ffff00" stroke="#111" stroke-width="1.6"/><path d="M1.5 6.5h14M1.5 10.5h14M1.5 14.5h14M8.5 6v13" stroke="#222" stroke-width="1.1"/><path d="M2 6l5-4" stroke="#ff2020" stroke-width="1.4"/></svg>
<div class="t" style="left:420px;top:503px;font-size:16px;transform:scaleX(0.83);transform-origin:0 0;">axPrePreg</div>
<div class="ab" style="left:488px;top:494px;width:106px;height:30px;background:#f0f0f0;border-left:1px solid #fff;border-right:2px solid #808080;border-bottom:2px solid #808080"></div>
<svg class="ab" style="left:493px;top:502px" width="17" height="20"><rect x="1" y="1" width="15" height="18" rx="1.5" fill="#ffff00" stroke="#111" stroke-width="1.6"/><path d="M1.5 6.5h14M1.5 10.5h14M1.5 14.5h14M8.5 6v13" stroke="#222" stroke-width="1.1"/><path d="M2 6l5-4" stroke="#ff2020" stroke-width="1.4"/></svg>
<div class="t" style="left:523px;top:503px;font-size:16px;transform:scaleX(0.83);transform-origin:0 0;">axBacking</div>
<div class="ab" style="left:595px;top:498px;width:77px;height:23px;background:#f0f0f0;border-left:1px solid #fff;border-right:2px solid #808080;border-bottom:2px solid #808080;border-bottom-right-radius:2px"></div>
<svg class="ab" style="left:605px;top:502px" width="14" height="16"><path d="M1 1h8l4 4v10H1z" fill="#fff" stroke="#111" stroke-width="1.5"/><path d="M9 1v4h4" fill="#1a1aa0" stroke="#1a1aa0" stroke-width="1"/><path d="M3.5 8h6M3.5 10.5h6M3.5 13h6" stroke="#666" stroke-width="0.9"/></svg>
<div class="t" style="left:628px;top:503px;font-size:16px;transform:scaleX(0.83);transform-origin:0 0;">dType</div>
<div class="ab" style="left:675px;top:498px;width:103px;height:23px;background:#f0f0f0;border-left:1px solid #fff;border-right:2px solid #808080;border-bottom:2px solid #808080;border-bottom-right-radius:2px"></div>
<svg class="ab" style="left:685px;top:502px" width="14" height="16"><path d="M1 1h8l4 4v10H1z" fill="#fff" stroke="#111" stroke-width="1.5"/><path d="M9 1v4h4" fill="#1a1aa0" stroke="#1a1aa0" stroke-width="1"/><path d="M3.5 8h6M3.5 10.5h6M3.5 13h6" stroke="#666" stroke-width="0.9"/></svg>
<div class="t" style="left:708px;top:503px;font-size:16px;transform:scaleX(0.83);transform-origin:0 0;">xFunctions</div>
<div class="ab" style="left:782px;top:498px;width:84px;height:23px;background:#f0f0f0;border-left:1px solid #fff;border-right:2px solid #808080;border-bottom:2px solid #808080;border-bottom-right-radius:2px"></div>
<svg class="ab" style="left:792px;top:502px" width="14" height="16"><path d="M1 1h8l4 4v10H1z" fill="#fff" stroke="#111" stroke-width="1.5"/><path d="M9 1v4h4" fill="#1a1aa0" stroke="#1a1aa0" stroke-width="1"/><path d="M3.5 8h6M3.5 10.5h6M3.5 13h6" stroke="#666" stroke-width="0.9"/></svg>
<div class="t" style="left:815px;top:503px;font-size:16px;transform:scaleX(0.83);transform-origin:0 0;">dGlobal</div>
<div class="ab" style="left:870px;top:498px;width:104px;height:23px;background:#f0f0f0;border-left:1px solid #fff;border-right:2px solid #808080;border-bottom:2px solid #808080;border-bottom-right-radius:2px"></div>
<svg class="ab" style="left:880px;top:502px" width="14" height="16"><path d="M1 1h8l4 4v10H1z" fill="#fff" stroke="#111" stroke-width="1.5"/><path d="M9 1v4h4" fill="#1a1aa0" stroke="#1a1aa0" stroke-width="1"/><path d="M3.5 8h6M3.5 10.5h6M3.5 13h6" stroke="#666" stroke-width="0.9"/></svg>
<div class="t" style="left:903px;top:503px;font-size:16px;transform:scaleX(0.83);transform-origin:0 0;">FaultTasks</div>
<div class="ab" style="left:978px;top:498px;width:60px;height:23px;background:#f0f0f0;border-left:1px solid #fff;border-right:2px solid #808080;border-bottom:2px solid #808080;border-bottom-right-radius:2px"></div>
<svg class="ab" style="left:988px;top:502px" width="14" height="16"><path d="M1 1h8l4 4v10H1z" fill="#fff" stroke="#111" stroke-width="1.5"/><path d="M9 1v4h4" fill="#1a1aa0" stroke="#1a1aa0" stroke-width="1"/><path d="M3.5 8h6M3.5 10.5h6M3.5 13h6" stroke="#666" stroke-width="0.9"/></svg>
<div class="t" style="left:1011px;top:503px;font-size:16px;transform:scaleX(0.83);transform-origin:0 0;">IPO</div>
<div class="ab" style="left:1041px;top:498px;width:138px;height:23px;background:#f0f0f0;border-left:1px solid #fff;border-right:2px solid #808080;border-bottom:2px solid #808080;border-bottom-right-radius:2px"></div>
<svg class="ab" style="left:1051px;top:502px" width="14" height="16"><path d="M1 1h8l4 4v10H1z" fill="#fff" stroke="#111" stroke-width="1.5"/><path d="M9 1v4h4" fill="#1a1aa0" stroke="#1a1aa0" stroke-width="1"/><path d="M3.5 8h6M3.5 10.5h6M3.5 13h6" stroke="#666" stroke-width="0.9"/></svg>
<div class="t" style="left:1074px;top:503px;font-size:16px;transform:scaleX(0.83);transform-origin:0 0;">pCommunication</div>
<div class="ab" style="left:1182px;top:498px;width:86px;height:23px;background:#f0f0f0;border-left:1px solid #fff;border-right:2px solid #808080;border-bottom:2px solid #808080;border-bottom-right-radius:2px"></div>
<svg class="ab" style="left:1192px;top:502px" width="14" height="16"><path d="M1 1h8l4 4v10H1z" fill="#fff" stroke="#111" stroke-width="1.5"/><path d="M9 1v4h4" fill="#1a1aa0" stroke="#1a1aa0" stroke-width="1"/><path d="M3.5 8h6M3.5 10.5h6M3.5 13h6" stroke="#666" stroke-width="0.9"/></svg>
<div class="t" style="left:1215px;top:503px;font-size:16px;transform:scaleX(0.83);transform-origin:0 0;">General</div>
<div class="ab" style="left:1272px;top:498px;width:136px;height:23px;background:#f0f0f0;border-left:1px solid #fff;border-right:2px solid #808080;border-bottom:2px solid #808080;border-bottom-right-radius:2px"></div>
<svg class="ab" style="left:1282px;top:502px" width="14" height="16"><path d="M1 1h8l4 4v10H1z" fill="#fff" stroke="#111" stroke-width="1.5"/><path d="M9 1v4h4" fill="#1a1aa0" stroke="#1a1aa0" stroke-width="1"/><path d="M3.5 8h6M3.5 10.5h6M3.5 13h6" stroke="#666" stroke-width="0.9"/></svg>
<div class="t" style="left:1305px;top:503px;font-size:16px;transform:scaleX(0.83);transform-origin:0 0;">xFunctionBlocks</div>
<div class="ab" style="left:0px;top:525px;width:1443px;height:8px;background:#f0f0f0;"></div>
<div class="ab" style="left:0px;top:525px;width:1443px;height:1px;background:#a8a8a8;"></div>
<div class="ab" style="left:0px;top:531px;width:1443px;height:1px;background:#a8a8a8;"></div>
<div class="ab" style="left:0px;top:532px;width:1443px;height:273px;background:#f0f0f0;"></div>
<div class="ab" style="left:0px;top:539px;width:1443px;height:1px;background:#fafcff;"></div>
<div class="ab" style="left:-2px;top:547px;width:117px;height:23px;background:#fff;border-top:2px solid #7a7a7a;border-left:2px solid #7a7a7a;border-right:1px solid #f8f8f8;border-bottom:1px solid #f8f8f8"></div>
<div class="dd" style="left:94px;top:549px;width:20px;height:20px;border-right:2px solid #6a6a6a;border-bottom:2px solid #6a6a6a"></div>
<div class="ab" style="left:935px;top:549px;width:15px;height:15px;background:#fff;border-top:2px solid #8a8a8a;border-left:2px solid #8a8a8a;border-right:1px solid #e8e8e8;border-bottom:1px solid #e8e8e8"></div>
<svg class="ab" style="left:937px;top:551px" width="12" height="11"><path d="M1.5 5l3 3.5 6-7" fill="none" stroke="#000" stroke-width="2.2"/></svg>
<div class="t" style="left:958px;top:549px;font-size:16px;transform:scaleX(0.83);transform-origin:0 0;transform:scaleX(0.809)">Display information</div>
<div class="ab" style="left:1138px;top:542px;width:199px;height:29px;background:#f0f0f0;border-top:1px solid #fff;border-left:1px solid #fff;border-right:2px solid #7a7a7a;border-bottom:2px solid #7a7a7a"></div>
<div class="t" style="left:1188px;top:549px;font-size:16px;transform:scaleX(0.83);transform-origin:0 0;transform:scaleX(0.855)">Acknowledge all</div>
<div class="ab" style="left:1342px;top:542px;width:120px;height:29px;background:#f0f0f0;border-top:1px solid #fff;border-left:1px solid #fff;border-right:2px solid #7a7a7a;border-bottom:2px solid #7a7a7a"></div>
<div class="t" style="left:1401px;top:549px;font-size:16px;transform:scaleX(0.83);transform-origin:0 0;transform:scaleX(0.855)">Acknowledge all</div>
<div class="ab" style="left:0px;top:577px;width:1443px;height:2px;background:#858585;"></div>
<div class="ab" style="left:0px;top:579px;width:1443px;height:19px;background:#f0f0f0;border-top:1px solid #fff"></div>
<div class="ab" style="left:0px;top:598px;width:1443px;height:2px;background:#858585;"></div>
<div class="ab" style="left:291px;top:578px;width:2px;height:21px;background:#858585;box-shadow:1px 0 0 #fff"></div>
<div class="ab" style="left:416px;top:578px;width:2px;height:21px;background:#858585;box-shadow:1px 0 0 #fff"></div>
<div class="ab" style="left:541px;top:578px;width:2px;height:21px;background:#858585;box-shadow:1px 0 0 #fff"></div>
<div class="ab" style="left:1301px;top:578px;width:2px;height:21px;background:#858585;box-shadow:1px 0 0 #fff"></div>
<div class="t" style="left:-3px;top:582px;font-size:16px;transform:scaleX(0.83);transform-origin:0 0;transform:scaleX(0.79)">Time [dd.mm.yy&nbsp;&nbsp;h:m:s:ms]</div>
<div class="t" style="left:301px;top:582px;font-size:16px;transform:scaleX(0.83);transform-origin:0 0;">Source</div>
<div class="t" style="left:425px;top:582px;font-size:16px;transform:scaleX(0.83);transform-origin:0 0;">Component</div>
<div class="t" style="left:551px;top:582px;font-size:16px;transform:scaleX(0.83);transform-origin:0 0;">Message</div>
<div class="ab" style="left:0px;top:600px;width:1443px;height:205px;background:#fff;"></div>
<div class="ab" style="left:0px;top:793px;width:1302px;height:12px;background:#efefef;"></div>
<div class="t" style="left:-3px;top:606px;font-size:16px;transform:scaleX(0.83);transform-origin:0 0;">04.04.23</div>
<div class="t" style="left:60px;top:606px;font-size:16px;transform:scaleX(0.83);transform-origin:0 0;">11:44:25:784</div>
<div class="t" style="left:301px;top:606px;font-size:16px;transform:scaleX(0.83);transform-origin:0 0;">AEE : axPrePreg</div>
<div class="t" style="left:425px;top:606px;font-size:16px;transform:scaleX(0.83);transform-origin:0 0;">--</div>
<div class="t" style="left:551px;top:606px;font-size:16px;transform:scaleX(0.83);transform-origin:0 0;">40002 : Programmed velocity is limited</div>
<div class="t" style="left:-3px;top:628px;font-size:16px;transform:scaleX(0.83);transform-origin:0 0;">04.04.23</div>
<div class="t" style="left:60px;top:628px;font-size:16px;transform:scaleX(0.83);transform-origin:0 0;">11:44:25:784</div>
<div class="t" style="left:301px;top:628px;font-size:16px;transform:scaleX(0.83);transform-origin:0 0;">AEE : axKnifeRot</div>
<div class="t" style="left:425px;top:628px;font-size:16px;transform:scaleX(0.83);transform-origin:0 0;">--</div>
<div class="t" style="left:551px;top:628px;font-size:16px;transform:scaleX(0.83);transform-origin:0 0;">40002 : Programmed velocity is limited</div>
<div class="t" style="left:-3px;top:649px;font-size:16px;transform:scaleX(0.83);transform-origin:0 0;">04.04.23</div>
<div class="t" style="left:60px;top:649px;font-size:16px;transform:scaleX(0.83);transform-origin:0 0;">11:44:25:784</div>
<div class="t" style="left:301px;top:649px;font-size:16px;transform:scaleX(0.83);transform-origin:0 0;">AEE : axKnifeLin</div>
<div class="t" style="left:425px;top:649px;font-size:16px;transform:scaleX(0.83);transform-origin:0 0;">--</div>
<div class="t" style="left:551px;top:649px;font-size:16px;transform:scaleX(0.83);transform-origin:0 0;">40002 : Programmed velocity is limited</div>
<div class="t" style="left:-3px;top:670px;font-size:16px;transform:scaleX(0.83);transform-origin:0 0;">04.04.23</div>
<div class="t" style="left:60px;top:670px;font-size:16px;transform:scaleX(0.83);transform-origin:0 0;">11:44:25:800</div>
<div class="t" style="left:301px;top:670px;font-size:16px;transform:scaleX(0.83);transform-origin:0 0;">AEE : axPrePreg</div>
<div class="t" style="left:425px;top:670px;font-size:16px;transform:scaleX(0.83);transform-origin:0 0;">3</div>
<div class="t" style="left:551px;top:670px;font-size:16px;transform:scaleX(0.83);transform-origin:0 0;">30002 : Command aborted (reason: 2, command type: 1001)</div>
<div class="t" style="left:-3px;top:691px;font-size:16px;transform:scaleX(0.83);transform-origin:0 0;">04.04.23</div>
<div class="t" style="left:60px;top:691px;font-size:16px;transform:scaleX(0.83);transform-origin:0 0;">11:44:25:804</div>
<div class="t" style="left:301px;top:691px;font-size:16px;transform:scaleX(0.83);transform-origin:0 0;">AEE : axBacking</div>
<div class="t" style="left:425px;top:691px;font-size:16px;transform:scaleX(0.83);transform-origin:0 0;">3</div>
<div class="t" style="left:551px;top:691px;font-size:16px;transform:scaleX(0.83);transform-origin:0 0;">30002 : Command aborted (reason: 2, command type: 1018)</div>
<div class="t" style="left:-3px;top:713px;font-size:16px;transform:scaleX(0.83);transform-origin:0 0;">04.04.23</div>
<div class="t" style="left:60px;top:713px;font-size:16px;transform:scaleX(0.83);transform-origin:0 0;">11:44:27:940</div>
<div class="t" style="left:301px;top:713px;font-size:16px;transform:scaleX(0.83);transform-origin:0 0;">AEE : axKnifeRot</div>
<div class="t" style="left:425px;top:713px;font-size:16px;transform:scaleX(0.83);transform-origin:0 0;">--</div>
<div class="t" style="left:551px;top:713px;font-size:16px;transform:scaleX(0.83);transform-origin:0 0;">20005 : Device type:1, log. address:530 faulted. (Bit:0, encoder number:0, reason: 0x4h)</div>
<div class="t" style="left:-3px;top:734px;font-size:16px;transform:scaleX(0.83);transform-origin:0 0;">04.04.23</div>
<div class="t" style="left:60px;top:734px;font-size:16px;transform:scaleX(0.83);transform-origin:0 0;">11:44:27:940</div>
<div class="t" style="left:301px;top:734px;font-size:16px;transform:scaleX(0.83);transform-origin:0 0;">AEE : axPrePreg</div>
<div class="t" style="left:425px;top:734px;font-size:16px;transform:scaleX(0.83);transform-origin:0 0;">--</div>
<div class="t" style="left:551px;top:734px;font-size:16px;transform:scaleX(0.83);transform-origin:0 0;">20005 : Device type:1, log. address:560 faulted. (Bit:0, encoder number:0, reason: 0x4h)</div>
<div class="t" style="left:-3px;top:755px;font-size:16px;transform:scaleX(0.83);transform-origin:0 0;">04.04.23</div>
<div class="t" style="left:60px;top:755px;font-size:16px;transform:scaleX(0.83);transform-origin:0 0;">11:44:27:940</div>
<div class="t" style="left:301px;top:755px;font-size:16px;transform:scaleX(0.83);transform-origin:0 0;">AEE : axBacking</div>
<div class="t" style="left:425px;top:755px;font-size:16px;transform:scaleX(0.83);transform-origin:0 0;">--</div>
<div class="t" style="left:551px;top:755px;font-size:16px;transform:scaleX(0.83);transform-origin:0 0;">20005 : Device type:1, log. address:590 faulted. (Bit:0, encoder number:0, reason: 0x4h)</div>
<div class="t" style="left:-3px;top:777px;font-size:16px;transform:scaleX(0.83);transform-origin:0 0;">04.04.23</div>
<div class="t" style="left:60px;top:777px;font-size:16px;transform:scaleX(0.83);transform-origin:0 0;">11:44:27:940</div>
<div class="t" style="left:301px;top:777px;font-size:16px;transform:scaleX(0.83);transform-origin:0 0;">AEE : axKnifeLin</div>
<div class="t" style="left:425px;top:777px;font-size:16px;transform:scaleX(0.83);transform-origin:0 0;">--</div>
<div class="t" style="left:551px;top:777px;font-size:16px;transform:scaleX(0.83);transform-origin:0 0;">20005 : Device type:1, log. address:500 faulted. (Bit:0, encoder number:0, reason: 0x4h)</div>
<div class="t" style="left:-3px;top:798px;font-size:16px;transform:scaleX(0.83);transform-origin:0 0;">04.04.23</div>
<div class="t" style="left:60px;top:798px;font-size:16px;transform:scaleX(0.83);transform-origin:0 0;">11:44:27:940</div>
<div class="t" style="left:301px;top:798px;font-size:16px;transform:scaleX(0.83);transform-origin:0 0;">AEE : axBacking</div>
<div class="t" style="left:425px;top:798px;font-size:16px;transform:scaleX(0.83);transform-origin:0 0;">1</div>
<div class="t" style="left:551px;top:798px;font-size:16px;transform:scaleX(0.83);transform-origin:0 0;">40005 : Missing enable(s) (parameter1: 7) and/or incorrect mode (parameter2: 1)</div>
</body></html>
